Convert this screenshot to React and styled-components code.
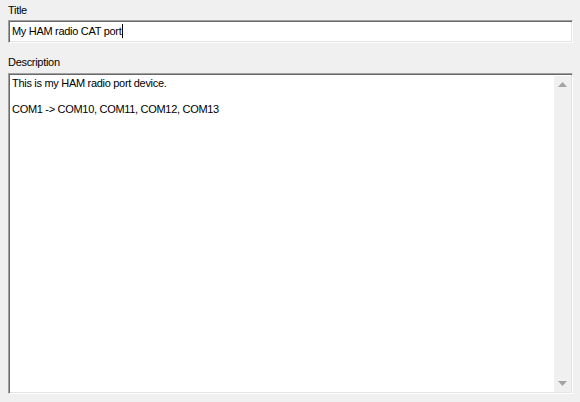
import React from "react";
import styled, { createGlobalStyle } from "styled-components";

const Global = createGlobalStyle`
  html, body {
    margin: 0;
    background: #f0f0f0;
  }
  body {
    font-family: Tahoma, "Liberation Sans", "DejaVu Sans", sans-serif;
    font-size: 11px;
    letter-spacing: -0.3px;
    color: #000;
  }
`;

const Form = styled.div`
  width: 580px;
  height: 402px;
  box-sizing: border-box;
  padding: 4px 7px 8px 8px;
  display: flex;
  flex-direction: column;
`;

const Label = styled.div`
  height: 13px;
  line-height: 13px;
  margin-top: ${(p) => p.$top || 0}px;
  margin-bottom: ${(p) => p.$gap || 3}px;
  white-space: nowrap;
`;

const Sunken = styled.div`
  box-sizing: border-box;
  background: #fff;
  border-top: 1px solid #a0a0a0;
  border-left: 1px solid #a0a0a0;
  border-right: 1px solid #fff;
  border-bottom: 1px solid #fff;
  box-shadow: inset 1px 1px 0 #696969, inset -1px -1px 0 #e3e3e3;
`;

const TitleBox = styled(Sunken)`
  height: 23px;
  padding: 3px 4px 0 3px;
  line-height: 14px;
  white-space: nowrap;
`;

const Caret = styled.span`
  display: inline-block;
  width: 1px;
  height: 14px;
  margin-left: 1px;
  background: #000;
  vertical-align: top;
`;

const MemoBox = styled(Sunken)`
  flex: 1;
  display: flex;
  padding: 2px 1px 1px 2px;
`;

const MemoText = styled.div`
  flex: 1;
  padding: 1px 2px 0 1px;
  line-height: 13px;
`;

const Line = styled.div`
  height: 13px;
  white-space: nowrap;
`;

const ScrollBar = styled.div`
  width: 17px;
  background: #f0f0f0;
  display: flex;
  flex-direction: column;
  justify-content: space-between;
  align-items: center;
`;

const Arrow = styled.div`
  height: 17px;
  width: 17px;
  display: flex;
  align-items: center;
  justify-content: center;
`;

function Triangle({ down }) {
  return (
    <svg width="9" height="5" viewBox="0 0 9 5">
      <polygon
        points={down ? "0,0 9,0 4.5,5" : "4.5,0 9,5 0,5"}
        fill="#a3a3a3"
      />
    </svg>
  );
}

export default function App() {
  return (
    <>
      <Global />
      <Form>
        <Label>Title</Label>
        <TitleBox>
          My HAM radio CAT port
          <Caret />
        </TitleBox>
        <Label $top={13} $gap={4}>Description</Label>
        <MemoBox>
          <MemoText>
            <Line>This is my HAM radio port device.</Line>
            <Line />
            <Line>COM1 -&gt; COM10, COM11, COM12, COM13</Line>
          </MemoText>
          <ScrollBar>
            <Arrow>
              <Triangle />
            </Arrow>
            <Arrow>
              <Triangle down />
            </Arrow>
          </ScrollBar>
        </MemoBox>
      </Form>
    </>
  );
}
